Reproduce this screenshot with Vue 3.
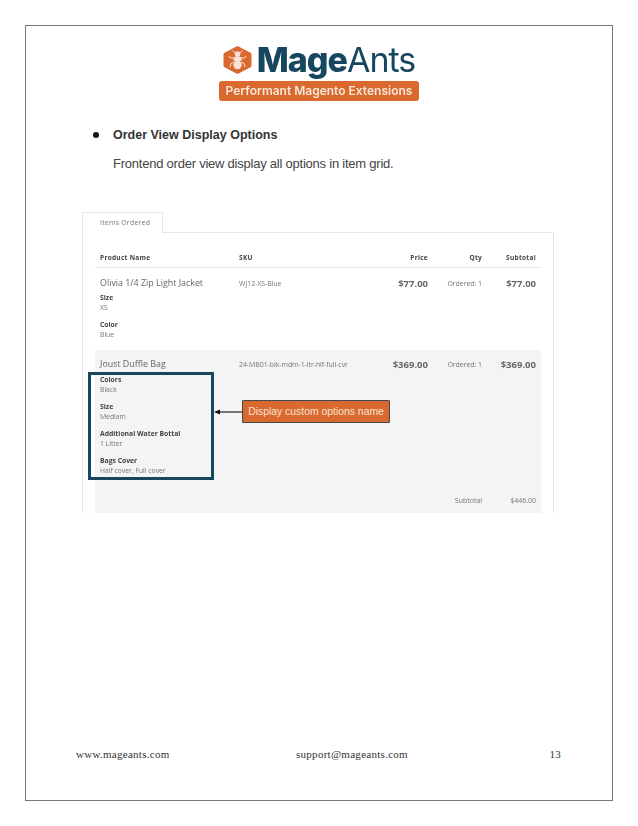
<template>
  <div class="page">
    <div class="frame">
      <header class="logo">
        <div class="logo-top">
          <svg class="hex" width="29" height="28" viewBox="0 0 29 28">
            <path d="M14.500 .5L28 7.500V20.500L14.500 27.500L1 20.500V7.500Z" fill="#d9692f" stroke="#d9692f" stroke-linejoin="round" />
            <g fill="none" stroke="#f8e3d6" stroke-width="1">
              <path d="M12 7L9.500 4.500M17 7L19.500 4.500M11 12H7.500L6 10M18 12H21.500L23 10M11 16L8 17.500L7 21M18 16L21 17.500L22 21" />
            </g>
            <g fill="#f8e3d6">
              <circle cx="14.500" cy="8" r="2.800" />
              <ellipse cx="14.500" cy="13" rx="4.200" ry="2.800" />
              <ellipse cx="14.500" cy="19" rx="4.200" ry="4.200" />
            </g>
          </svg>
          <div class="brand"><b>Mage</b><span>Ants</span></div>
        </div>
        <div class="tagline">Performant Magento Extensions</div>
      </header>

      <section class="intro">
        <div class="bullet-row">
          <i class="dot"></i>
          <h2>Order View Display Options</h2>
        </div>
        <p>Frontend order view display all options in item grid.</p>
      </section>

      <section class="shot">
        <div class="tab-row">
          <div class="tab">Items Ordered</div>
          <div class="tab-line"></div>
        </div>
        <div class="panel">
          <div class="grid head">
            <div>Product Name</div>
            <div>SKU</div>
            <div class="r">Price</div>
            <div class="r">Qty</div>
            <div class="r">Subtotal</div>
          </div>

          <div v-for="item in items" :key="item.sku" class="item" :class="{ alt: item.alt }">
            <div class="grid">
              <div class="name">{{ item.name }}</div>
              <div class="sku">{{ item.sku }}</div>
              <div class="r money">{{ item.price }}</div>
              <div class="r sku">Ordered: 1</div>
              <div class="r money">{{ item.price }}</div>
            </div>
            <dl class="options">
              <template v-for="opt in item.options" :key="opt[0]">
                <dt>{{ opt[0] }}</dt>
                <dd>{{ opt[1] }}</dd>
              </template>
            </dl>
            <div v-if="item.alt" class="total">
              <span>Subtotal</span>
              <span>$446.00</span>
            </div>
          </div>
        </div>

        <div class="highlight"></div>
        <div class="callout-wrap">
          <svg class="arrow" width="28" height="6" viewBox="0 0 28 6">
            <path d="M0 3L6 .5V5.500Z" fill="#111" />
            <path d="M5 3H28" stroke="#222" stroke-width="1.200" />
          </svg>
          <div class="callout">Display custom options name</div>
        </div>
      </section>

      <footer class="foot">
        <span>www.mageants.com</span>
        <span>support@mageants.com</span>
        <span>13</span>
      </footer>
    </div>
  </div>
</template>

<script setup>
const items = [
  {
    name: 'Olivia 1/4 Zip Light Jacket',
    sku: 'WJ12-XS-Blue',
    price: '$77.00',
    options: [['Size', 'XS'], ['Color', 'Blue']]
  },
  {
    name: 'Joust Duffle Bag',
    sku: '24-MB01-blk-mdm-1-ltr-hlf-full-cvr',
    price: '$369.00',
    alt: true,
    options: [
      ['Colors', 'Black'],
      ['Size', 'Mediam'],
      ['Additional Water Bottal', '1 Litter'],
      ['Bags Cover', 'Half cover, Full cover']
    ]
  }
]
</script>

<style>
html, body {
  background: #fff;
}
</style>

<style scoped>
.page {
  width: 638px;
  height: 826px;
  padding: 25px;
  box-sizing: border-box;
  background: #fff;
  overflow: hidden;
}

.frame {
  height: 776px;
  box-sizing: border-box;
  border: 1px solid #777;
  display: flex;
  flex-direction: column;
}

/* logo */
.logo {
  display: flex;
  flex-direction: column;
  align-items: center;
  padding-top: 13px;
  filter: blur(0.45px);
}

.logo-top {
  display: flex;
  align-items: center;
  gap: 5px;
  height: 42px;
}

.brand {
  font-family: Inter, sans-serif;
  font-size: 34px;
  line-height: 42px;
  letter-spacing: -1px;
  color: #17475f;
}

.brand b {
  font-weight: 800;
}

.brand span {
  font-weight: 400;
}

.tagline {
  width: 200px;
  height: 20px;
  border-radius: 3px;
  background: #d9692f;
  color: #fbe6d8;
  font-family: Inter, sans-serif;
  font-weight: 600;
  font-size: 12px;
  line-height: 20px;
  text-align: center;
}

/* bullet text */
.intro {
  font-family: "Liberation Sans", Arial, sans-serif;
  color: #333;
  margin-top: 26px;
}

.bullet-row {
  display: flex;
  align-items: center;
  padding-left: 67px;
  height: 16px;
}

.dot {
  width: 6px;
  height: 6px;
  border-radius: 50%;
  background: #111;
  margin-right: 14px;
}

h2 {
  margin: 0;
  font-size: 12.500px;
  font-weight: 700;
}

.intro p {
  margin: 13px 0 0 87px;
  font-size: 13px;
  line-height: 16px;
  letter-spacing: -0.23px;
  color: #444;
}

/* embedded screenshot */
.shot {
  position: relative;
  margin: 40px 0 0 56px;
  width: 472px;
  font-family: "Open Sans", sans-serif;
  color: #666;
  filter: blur(0.5px);
}

.tab-row {
  display: flex;
  height: 21px;
}

.tab {
  width: 81px;
  box-sizing: border-box;
  border: 1px solid #e6e6e6;
  border-bottom: 0;
  padding: 5px 0 0 17px;
  font-size: 7px;
  line-height: 10px;
  letter-spacing: 0.2px;
  color: #777;
}

.tab-line {
  flex: 1;
  border-bottom: 1px solid #e6e6e6;
}

.panel {
  height: 280px;
  box-sizing: border-box;
  border-left: 1px solid #e6e6e6;
  border-right: 1px solid #e6e6e6;
  padding: 0 12px;
  display: flex;
  flex-direction: column;
}

.grid {
  display: grid;
  grid-template-columns: 139px 142px 57px 54px 54px;
  align-items: center;
}

.grid > div {
  padding: 0 5px;
}

.r {
  text-align: right;
}

.head {
  height: 35px;
  box-sizing: border-box;
  padding-top: 15px;
  border-bottom: 1px solid #e4e4e4;
  font-size: 6.500px;
  font-weight: 700;
  letter-spacing: 0.3px;
  color: #444;
}

.item {
  height: 82px;
  padding-top: 8px;
  box-sizing: border-box;
}

.item.alt {
  flex: 1;
  padding-top: 7px;
  position: relative;
  background: #f4f4f4;
}

.name {
  font-size: 8.900px;
  line-height: 14px;
  color: #666;
}

.sku {
  font-size: 7px;
  letter-spacing: -0.07px;
  color: #777;
}

.money {
  font-size: 9.500px;
  font-weight: 700;
  color: #666;
}

.options {
  margin: 3px 0 0;
  padding-left: 5px;
  font-size: 6.800px;
  line-height: 9.500px;
}

.alt .options {
  margin-top: 4px;
}

.options dt {
  font-weight: 700;
  color: #444;
}

.options dd {
  margin: 0 0 8px;
  color: #777;
}

.total {
  position: absolute;
  right: 5px;
  bottom: 8px;
  display: flex;
  gap: 28px;
  font-size: 7px;
  line-height: 9px;
  color: #777;
}

.highlight {
  position: absolute;
  left: 6px;
  top: 160px;
  width: 126px;
  height: 108px;
  box-sizing: border-box;
  border: 3px solid #17475f;
}

.callout-wrap {
  position: absolute;
  left: 132px;
  top: 188px;
  display: flex;
  align-items: center;
}

.arrow {
  display: block;
}

.callout {
  width: 148px;
  height: 23px;
  box-sizing: border-box;
  border: 1px solid #3d4a50;
  border-radius: 1px;
  background: #d9692f;
  color: #fbe3d3;
  font-family: "Liberation Sans", Arial, sans-serif;
  font-size: 10.400px;
  line-height: 21px;
  text-align: center;
}

/* footer */
.foot {
  margin-top: auto;
  margin-bottom: 39px;
  padding: 0 51px 0 50px;
  display: grid;
  grid-template-columns: 220px 1fr auto;
  font-family: "Liberation Serif", "Times New Roman", serif;
  font-size: 11px;
  line-height: 14px;
  letter-spacing: 0.28px;
  color: #333;
}
</style>
